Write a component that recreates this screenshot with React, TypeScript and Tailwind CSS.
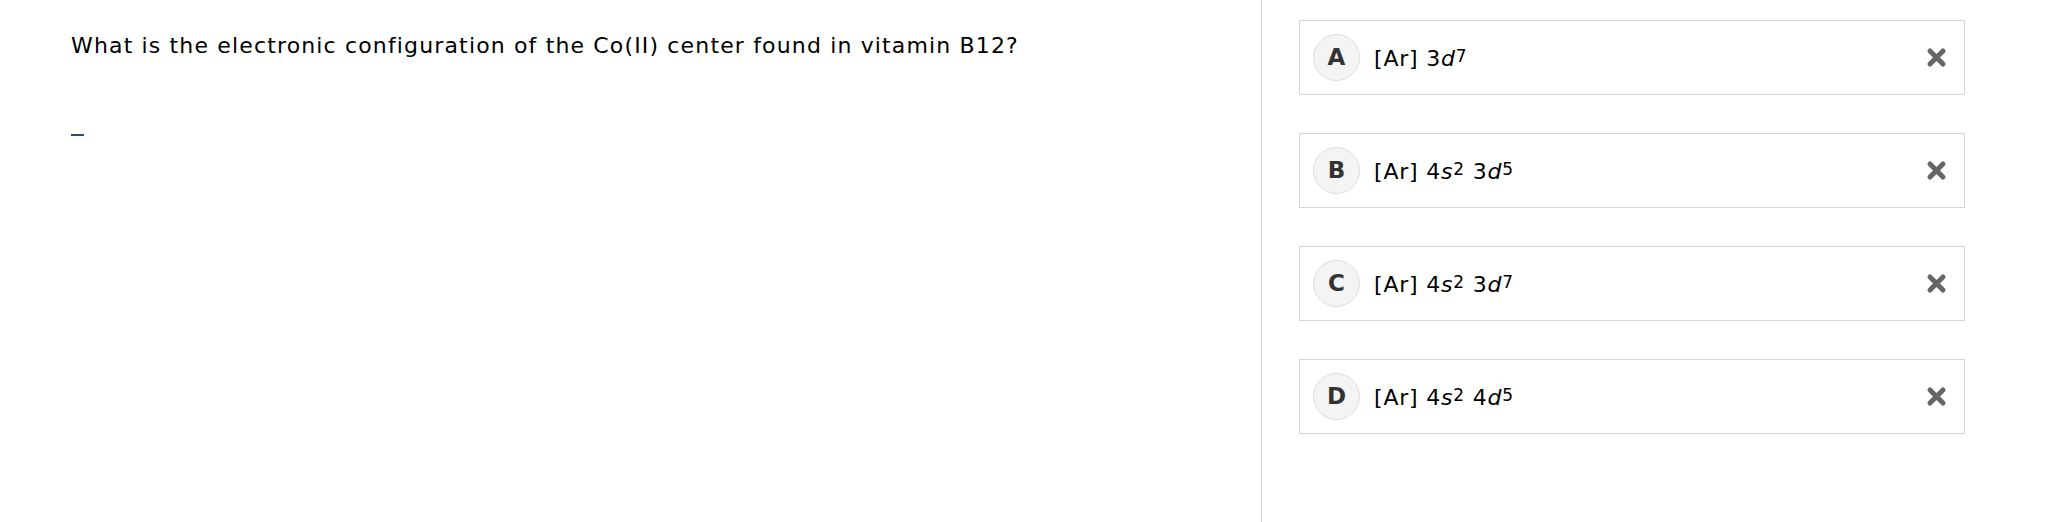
import React from "react";

const options = [
  { letter: "A", parts: [["[Ar] 3", ""], ["d", "i"], ["7", "sup"]] },
  { letter: "B", parts: [["[Ar] 4", ""], ["s", "i"], ["2", "sup"], [" 3", ""], ["d", "i"], ["5", "sup"]] },
  { letter: "C", parts: [["[Ar] 4", ""], ["s", "i"], ["2", "sup"], [" 3", ""], ["d", "i"], ["7", "sup"]] },
  { letter: "D", parts: [["[Ar] 4", ""], ["s", "i"], ["2", "sup"], [" 4", ""], ["d", "i"], ["5", "sup"]] },
];

function XMark() {
  return (
    <svg width="21" height="21" viewBox="0 0 21 21" className="shrink-0">
      <path d="M4 4 L17 17 M17 4 L4 17" stroke="#666" strokeWidth="5" strokeLinecap="round" />
    </svg>
  );
}

export default function App() {
  return (
    <div className="w-[2058px] h-[522px] bg-white flex text-black font-['DejaVu_Sans',Verdana,sans-serif] overflow-hidden">
      {/* question side */}
      <div className="w-[1261px] shrink-0 pl-[71px] pt-[32px]">
        <p className="text-[22px] leading-[27px] tracking-[1.15px]">
          What is the electronic configuration of the Co(II) center found in vitamin B12?
        </p>
        <div className="mt-[75px] w-[13px] h-[2px] bg-[#2c4a78]" />
      </div>

      {/* answers side */}
      <div className="flex-1 border-l border-[#d4d4d4] pl-[37px] pt-[20px]">
        <div className="w-[666px] flex flex-col gap-[38px]">
          {options.map((o) => (
            <div
              key={o.letter}
              className="h-[75px] border border-[#d4d4d4] flex items-center pl-[13px] pr-[17px]"
            >
              <div className="w-[47px] h-[47px] rounded-full bg-[#f4f4f4] border border-[#dddddd] flex items-center justify-center text-[23px] font-bold text-[#333]">
                {o.letter}
              </div>
              <div className="ml-[14px] text-[22px] leading-none tracking-[0.8px] flex-1 mt-[2px]">
                {o.parts.map(([t, k], i) =>
                  k === "i" ? (
                    <i key={i}>{t}</i>
                  ) : k === "sup" ? (
                    <sup key={i} className="text-[17px] relative -top-[4px]">{t}</sup>
                  ) : (
                    <span key={i} className="whitespace-pre">{t}</span>
                  )
                )}
              </div>
              <XMark />
            </div>
          ))}
        </div>
      </div>
    </div>
  );
}
